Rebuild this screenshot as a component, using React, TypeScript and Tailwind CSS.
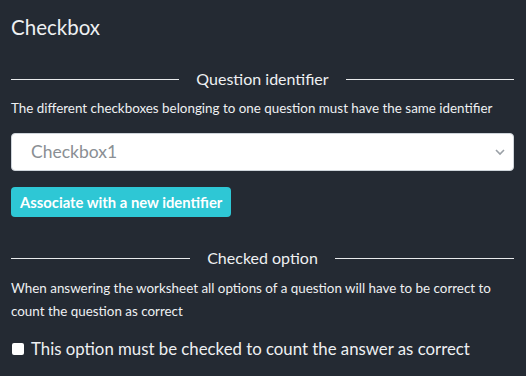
import React from 'react';

const Legend: React.FC<{ label: string }> = ({ label }) => (
  <div className="flex items-center gap-[17px]">
    <div className="h-px flex-1 bg-[#e8eaec]" />
    <span className="text-[16px] leading-6 text-[#eef0f2]">{label}</span>
    <div className="h-px flex-1 bg-[#e8eaec]" />
  </div>
);

export default function App() {
  return (
    <div
      className="h-[376px] w-[526px] overflow-hidden bg-[#242a33] pl-[11px] pr-[12px] pt-[13px] text-[#eef0f2]"
      style={{ fontFamily: 'Lato, "Noto Sans", sans-serif' }}
    >
      <h1 className="text-[20.5px] leading-7">Checkbox</h1>

      <div className="mt-[26px]">
        <Legend label="Question identifier" />
        <p className="mt-[7px] text-[13.4px] leading-5">
          The different checkboxes belonging to one question must have the same identifier
        </p>
        <div className="relative mt-[15px] h-[38px] w-full rounded-[4px] border border-[#ced4da] bg-white">
          <span className="absolute left-[19px] top-[6px] text-[17.5px] leading-6 text-[#8a8f94]">Checkbox1</span>
          <svg className="absolute right-[8px] top-[14px]" width="10" height="8" viewBox="0 0 10 8">
            <path d="M1 2l4 4 4-4" fill="none" stroke="#9aa0a6" strokeWidth="1.6" />
          </svg>
        </div>
        <button className="mt-[16px] h-[30px] rounded-[4px] bg-[#2ec7d5] px-[9px] text-[14.8px] font-bold text-white">
          Associate with a new identifier
        </button>
      </div>

      <div className="mt-[29px]">
        <Legend label="Checked option" />
        <p className="mt-[7px] text-[13.4px] leading-[23px]">
          When answering the worksheet all options of a question will have to be correct to count the question as
          correct
        </p>
        <label className="mt-[14px] flex items-center gap-[7px] text-[16.8px] leading-6">
          <span className="ml-px h-[12px] w-[12px] rounded-[2px] bg-white" />
          This option must be checked to count the answer as correct
        </label>
      </div>
    </div>
  );
}
